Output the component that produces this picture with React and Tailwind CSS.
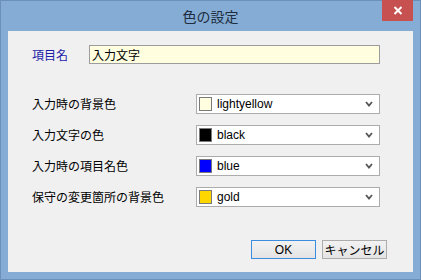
import { useState } from "react";

const font = { fontFamily: '"Noto Sans CJK JP", "Liberation Sans", sans-serif' };
const latin = { fontFamily: '"Liberation Sans", "Noto Sans CJK JP", sans-serif' };

const rows = [
  { label: "入力時の背景色", value: "lightyellow", swatch: "bg-[#ffffe0]" },
  { label: "入力文字の色", value: "black", swatch: "bg-[#000000]" },
  { label: "入力時の項目名色", value: "blue", swatch: "bg-[#0000ff]" },
  { label: "保守の変更箇所の背景色", value: "gold", swatch: "bg-[#ffd700]" },
];

function Chevron() {
  return (
    <svg width="8" height="6" viewBox="0 0 8 6" className="shrink-0">
      <path d="M1 1 L4 4.5 L7 1" fill="none" stroke="#555" strokeWidth="1.8" />
    </svg>
  );
}

function ColorSelect({ value, swatch }) {
  return (
    <div className="w-[184px] h-[20px] bg-white border border-[#acacac] flex items-center pl-[2px] pr-[6px]">
      <div className={`w-[13px] h-[14px] border border-[#7a7a7a] ${swatch}`} />
      <span className="ml-[5px] flex-1 text-[12px] leading-none text-black" style={latin}>{value}</span>
      <Chevron />
    </div>
  );
}

export default function App() {
  const [name, setName] = useState("入力文字");

  return (
    <div className="w-[421px] h-[280px] bg-[#84acd4] border border-[#6b91ba] flex flex-col" style={font}>
      <div className="h-[30px] flex items-start relative">
        <div className="flex-1 text-center text-[14px] leading-[31px] text-[#1f2e40]">色の設定</div>
        <div className="absolute right-[7px] top-[-1px] w-[31px] h-[21px] bg-[#c75050] flex items-center justify-center">
          <svg width="10" height="9" viewBox="0 0 10 9">
            <path d="M1.5 1 L8.5 8 M8.5 1 L1.5 8" stroke="white" strokeWidth="2" />
          </svg>
        </div>
      </div>

      <div className="mx-[7px] h-[241px] bg-[#f0f0f0] flex flex-col">
        <div className="flex items-center mt-[14px] pl-[24px]">
          <span className="w-[57px] text-[12px] text-[#1c1ca8]">項目名</span>
          <input
            value={name}
            onChange={(e) => setName(e.target.value)}
            className="w-[291px] h-[19px] bg-[#ffffe0] border border-[#9c9c9c] px-[2px] text-[12px] text-black outline-none"
            style={font}
          />
        </div>

        <div className="flex flex-col gap-[11px] mt-[30px]">
          {rows.map((r) => (
            <div key={r.label} className="flex items-center pl-[24px]">
              <span className="w-[164px] text-[12px] text-black">{r.label}</span>
              <ColorSelect value={r.value} swatch={r.swatch} />
            </div>
          ))}
        </div>

        <div className="flex-1" />
        <div className="flex justify-end gap-[6px] pr-[26px] mb-[13px]">
          <button className="w-[65px] h-[19px] border border-[#3c8de0] bg-gradient-to-b from-[#f2f2f2] to-[#e4e4e4] text-[12px] leading-none text-black" style={latin}>
            OK
          </button>
          <button className="w-[65px] h-[19px] border border-[#acacac] bg-gradient-to-b from-[#f2f2f2] to-[#e4e4e4] text-[12px] leading-none text-black">
            キャンセル
          </button>
        </div>
      </div>
    </div>
  );
}
